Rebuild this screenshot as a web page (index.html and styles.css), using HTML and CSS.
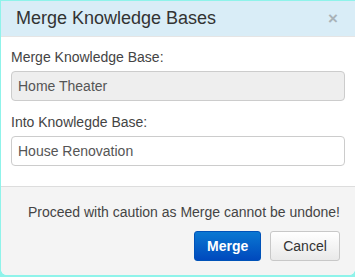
FILE: index.html
```html
<!DOCTYPE html>
<html lang="en">
<head>
    <meta charset="UTF-8">
    <title>Merge Knowledge Bases</title>
    <link rel="stylesheet" href="styles.css">
</head>
<body>
    <div class="modal">
        <div class="modal-header">
            <h4 class="modal-title">Merge Knowledge Bases</h4>
            <button class="close">&times;</button>
        </div>
        <div class="modal-body">
            <label class="field-label">Merge Knowledge Base:</label>
            <input class="field" type="text" value="Home Theater" disabled>
            <label class="field-label">Into Knowlegde Base:</label>
            <input class="field" type="text" value="House Renovation">
        </div>
        <div class="modal-footer">
            <p class="warning">Proceed with caution as Merge cannot be undone!</p>
            <div class="actions">
                <button class="btn btn-primary">Merge</button>
                <button class="btn btn-default">Cancel</button>
            </div>
        </div>
    </div>
</body>
</html>
```

FILE: styles.css
```css
body {
    margin: 0;
    background-color: #8ff3ea;
    font-family: "Liberation Sans", Arial, sans-serif;
    font-size: 14px;
    color: #333;
    height: 277px;
    overflow: hidden;
}

.modal {
    margin: 1px 0 0 1px;
    height: 274px;
    background-color: #fff;
    border-radius: 0 0 6px 6px;
    display: flex;
    flex-direction: column;
    overflow: hidden;
}

.modal-header {
    background-color: #d9edf7;
    height: 35px;
    display: flex;
    align-items: center;
    justify-content: space-between;
    padding: 0 17px 0 15px;
    border-bottom: 1px solid #e5e5e5;
}

.modal-title {
    margin: 0;
    font-size: 18px;
    font-weight: normal;
    color: #333;
}

.close {
    background: transparent;
    border: none;
    padding: 0;
    font-size: 17px;
    font-weight: bold;
    color: #a9b3b8;
    line-height: 1;
    font-family: "Liberation Sans", Arial, sans-serif;
}

.modal-body {
    padding: 12px 10px 20px 10px;
    display: flex;
    flex-direction: column;
}

.field-label {
    color: #444;
    margin-bottom: 6px;
}

.field {
    height: 30px;
    box-sizing: border-box;
    border: 1px solid #ccc;
    border-radius: 4px;
    padding: 0 6px;
    font-family: inherit;
    font-size: 14px;
    color: #555;
    background-color: #fff;
    margin-bottom: 13px;
}

.field:last-child {
    margin-bottom: 0;
}

.field[disabled] {
    background-color: #eee;
}

.modal-footer {
    flex: 1;
    background-color: #f4f4f4;
    border-top: 1px solid #ddd;
    padding: 17px 15px 0 14px;
    text-align: right;
}

.warning {
    margin: 0 0 11px 0;
    color: #444;
    font-size: 14px;
}

.actions {
    display: flex;
    justify-content: flex-end;
    gap: 9px;
}

.btn {
    height: 30px;
    border-radius: 3px;
    font-family: inherit;
    font-size: 14px;
    padding: 0 12px;
}

.btn-primary {
    width: 67px;
    color: #fff;
    font-weight: bold;
    border: 1px solid #0052b8;
    background: linear-gradient(#0a78d2, #0049bd);
}

.btn-default {
    width: 70px;
    color: #333;
    border: 1px solid #c8c8c8;
    background: linear-gradient(#fff, #e9e9e9);
}
```
